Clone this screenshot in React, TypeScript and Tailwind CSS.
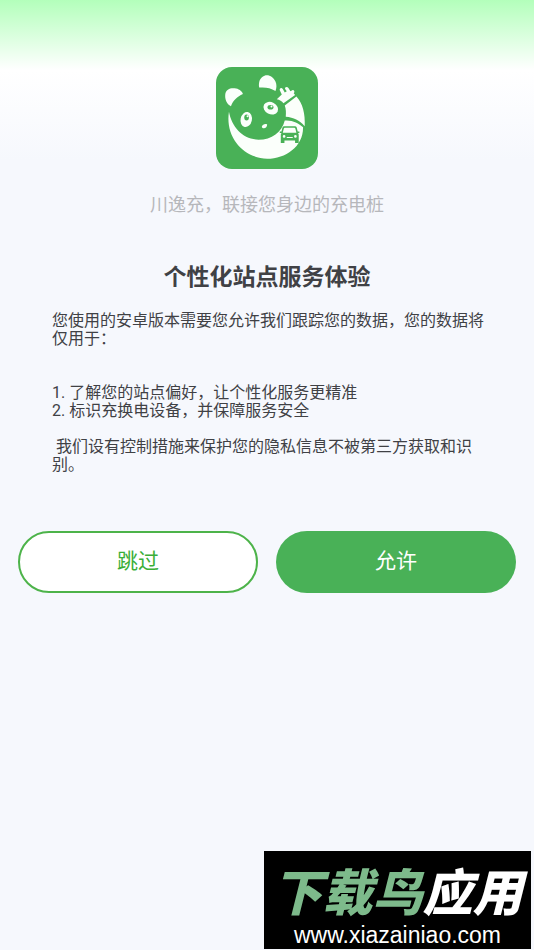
import type { ReactNode } from 'react'

function PandaLogo() {
  return (
    <svg viewBox="30 29 307 307" className="h-[102px] w-[102px]" role="img" aria-label="川逸充">
      <rect x="30" y="29" width="307" height="307" rx="48" fill="#49b157" />
      <g fill="#fbfffb">
        {/* ears */}
        <path d="M75 147C62 140 56 126 58 110C60 97 73 91 86 93C98 94 108 101 111 110C94 118 81 129 75 147Z" />
        <path d="M160 91C157 74 163 59 176 55C190 51 203 60 209 73C213 82 213 92 209 101C194 92 178 89 160 91Z" />
        {/* body */}
        <path d="M69 164C78 212 112 247 158 248C198 248 228 226 237 190C259 188 279 198 292 210C293 268 240 305 184 305C111 303 57 239 69 164Z" />
        {/* arm */}
        <path d="M237 145L272 118C291 138 299 171 297 207C281 189 264 181 240 179C241 166 241 156 237 145Z" />
        {/* plug */}
        <path d="M213 126L228 112L222 99C220 93 227 89 231 95L237 106L243 102L238 95C236 90 244 87 248 92L254 102L261 98C266 98 268 104 264 108L268 113L233 138C228 132 222 128 213 126Z" />
        {/* eyes */}
        <ellipse cx="121" cy="187" rx="17" ry="23" transform="rotate(12 121 187)" />
        <ellipse cx="195" cy="153" rx="23" ry="18" transform="rotate(28 195 153)" />
        <path d="M168 208C170 202 178 199 184 202C184 209 178 215 172 213C169 212 168 211 168 208Z" />
      </g>
      <ellipse cx="122" cy="181" rx="7" ry="9" fill="#49b157" />
      <ellipse cx="194" cy="150" rx="9" ry="7" fill="#49b157" />
      <circle cx="125" cy="177" r="3" fill="#fbfffb" />
      <circle cx="197" cy="148" r="3" fill="#fbfffb" />
      {/* car */}
      <path
        fill="#49b157"
        fillRule="evenodd"
        d="M236 207H267Q272 207 273 211L276 223H281V228H277L279 232V258H268V250H236V258H225V232L227 228H222V223H227L230 211Q231 207 236 207ZM237 212Q235 212 234 215L231 227H272L269 215Q268 212 266 212ZM235 234A4 4 0 1 0 235 242A4 4 0 1 0 235 234ZM269 234A4 4 0 1 0 269 242A4 4 0 1 0 269 234ZM243 240V243H261V240Z"
      />
    </svg>
  )
}

function Paragraph({ children }: { children: ReactNode }) {
  return <p className="whitespace-pre-wrap">{children}</p>
}

function Watermark() {
  return (
    <div className="absolute right-[3px] bottom-px flex h-[98px] w-[267px] flex-col items-center bg-black pt-[18px] font-['Liberation_Sans','Noto_Sans_CJK_SC',sans-serif] whitespace-nowrap">
      <p className="text-[50px] leading-[50px] font-black text-white italic">
        <span className="text-[#7dba8b]">下载鸟</span>应用
      </p>
      <a href="#" className="text-[23px] leading-8 text-white">
        www.xiazainiao.com
      </a>
    </div>
  )
}

export default function App() {
  return (
    <main className="relative min-h-screen bg-[#f6f8fd] bg-[linear-gradient(to_bottom,#b3ffbb_0px,#ffffff_70px,#f6f8fd_160px)] font-[Roboto,'Noto_Sans_CJK_SC',sans-serif] text-[#404145]">
      <header className="flex flex-col items-center pt-[67px]">
        <PandaLogo />
        <p className="mt-[22px] text-lg leading-7 text-[#b6b7bb]">川逸充，联接您身边的充电桩</p>
        <h1 className="mt-[43px] text-[23px] leading-8 font-bold">个性化站点服务体验</h1>
      </header>

      <section className="mt-[18px] flex flex-col gap-[18px] pr-12 pl-[52px] text-base leading-[18px]">
        <Paragraph>您使用的安卓版本需要您允许我们跟踪您的数据，您的数据将仅用于：</Paragraph>
        <Paragraph>{'\n1. 了解您的站点偏好，让个性化服务更精准\n2. 标识充换电设备，并保障服务安全'}</Paragraph>
        <Paragraph>{' 我们设有控制措施来保护您的隐私信息不被第三方获取和识别。'}</Paragraph>
      </section>

      <div className="mt-[57px] grid grid-cols-2 gap-[18px] px-[18px] text-[21px]">
        <button type="button" className="h-[62px] rounded-full border-2 border-[#4db34a] bg-white text-[#3aae37]">
          跳过
        </button>
        <button type="button" className="h-[62px] rounded-full bg-[#49b157] text-white">
          允许
        </button>
      </div>

      <Watermark />
    </main>
  )
}
